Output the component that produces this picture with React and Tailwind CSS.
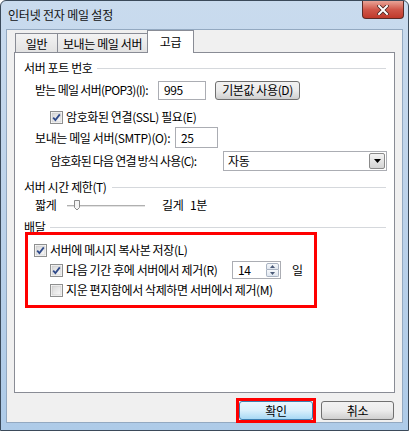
import React from 'react';

const FONT = "font-['Noto_Sans_CJK_KR','Noto_Sans',sans-serif]";

const CheckBox = ({ checked }) => (
  <svg width="13" height="13" viewBox="0 0 13 13" className="shrink-0">
    <defs>
      <linearGradient id="cbg" x1="0" y1="0" x2="1" y2="1">
        <stop offset="0" stopColor="#d6d6d6" />
        <stop offset="1" stopColor="#fafafa" />
      </linearGradient>
    </defs>
    <rect x="0.5" y="0.5" width="12" height="12" fill="#fff" stroke="#8e8f8f" />
    <rect x="2" y="2" width="9" height="9" fill="url(#cbg)" stroke="#c4c4c4" strokeWidth="0.6" />
    {checked && (
      <path d="M3.2 6.6 L5.4 9 L9.8 3.4" fill="none" stroke="#2f4a8a" strokeWidth="1.8" />
    )}
  </svg>
);

const Check = ({ checked, label, className = '' }) => (
  <div className={`flex items-center gap-[3px] ${className}`}>
    <CheckBox checked={checked} />
    <span>{label}</span>
  </div>
);

const GroupHeader = ({ title, className = '' }) => (
  <div className={`flex items-center h-[14px] ${className}`}>
    <span>{title}</span>
    <div className="flex-1 h-px bg-[#d5d8dc] ml-[5px]" />
  </div>
);

const TextBox = ({ value, className = '' }) => (
  <div className={`shrink-0 border border-[#abadb3] bg-white flex items-center pl-[5px] ${className}`}>
    {value}
  </div>
);

const Button = ({ children, primary, className = '' }) => (
  <div
    className={`shrink-0 flex items-center justify-center rounded-[3px] border ${
      primary
        ? 'border-[#3c7fb1] bg-linear-to-b from-[#eaf6fd] via-[#d9f0fc] to-[#a7d9f5]'
        : 'border-[#707070] bg-linear-to-b from-[#f2f2f2] via-[#ebebeb] to-[#cfcfcf]'
    } ${className}`}
  >
    {children}
  </div>
);

export default function App() {
  return (
    <div className={`w-[409px] h-[431px] text-[12px] tracking-[-0.4px] text-black leading-none whitespace-nowrap ${FONT}`}>
      <div className="w-[409px] h-[431px] border border-[#3b4a5a] rounded-t-[6px] bg-linear-to-b from-[#c9dbee] via-[#bcd2ea] to-[#aecbe8] flex flex-col">
        {/* title bar */}
        <div className="h-[28px] flex justify-between shrink-0">
          <span className="pl-[7px] pt-[8px] text-[12px] tracking-[-0.2px] text-[#111]">인터넷 전자 메일 설정</span>
          <div className="w-[42px] h-[18px] mr-[4px] rounded-b-[4px] border border-t-0 border-[#5b2a26] bg-linear-to-b from-[#e8a397] via-[#d0574a] to-[#c0392b] flex items-center justify-center">
            <svg width="12" height="10" viewBox="0 0 12 10">
              <path d="M2 1 L10 9 M10 1 L2 9" stroke="#4a2420" strokeWidth="3.6" strokeLinecap="square" />
              <path d="M2 1 L10 9 M10 1 L2 9" stroke="#fff" strokeWidth="2" strokeLinecap="square" />
            </svg>
          </div>
        </div>

        {/* client area */}
        <div className="mx-[5px] border border-[#93a9c1] bg-[#f0f0f0] flex flex-col px-[7px] h-[394px]">
          {/* tabs */}
          <div className="flex items-end h-[22px] pl-[1px] relative z-10">
            <div className="h-[19px] w-[43px] border border-b-0 border-[#898c95] bg-linear-to-b from-[#f3f3f3] to-[#e2e2e2] flex items-center justify-center pt-[1px]">
              일반
            </div>
            <div className="h-[19px] w-[91px] -ml-px border border-b-0 border-[#898c95] bg-linear-to-b from-[#f3f3f3] to-[#e2e2e2] flex items-center justify-center pt-[1px]">
              보내는 메일 서버
            </div>
            <div className="h-[23px] w-[47px] -ml-px -mb-px border border-b-0 border-[#898c95] bg-white flex items-start justify-center pt-[5px]">
              고급
            </div>
          </div>

          {/* panel */}
          <div className="h-[341px] border border-[#898c95] bg-white flex flex-col px-[9px] pr-[8px] relative">
            <GroupHeader title="서버 포트 번호" className="mt-[8px]" />

            <div className="flex items-center h-[20px] mt-[5px] pl-[11px]">
              <span className="w-[123px] shrink-0 tracking-[-0.7px]">받는 메일 서버(POP3)(I):</span>
              <TextBox value="995" className="w-[48px] h-[19px]" />
              <Button className="ml-[9px] w-[85px] h-[19px]">기본값 사용(D)</Button>
            </div>

            <Check checked label="암호화된 연결(SSL) 필요(E)" className="h-[14px] mt-[10px] pl-[26px]" />

            <div className="flex items-center h-[21px] mt-[3px] pl-[11px]">
              <span className="w-[140px] shrink-0">보내는 메일 서버(SMTP)(O):</span>
              <TextBox value="25" className="w-[43px] h-[21px]" />
            </div>

            <div className="flex items-center h-[20px] mt-[3px] pl-[26px]">
              <span className="w-[173px] shrink-0 tracking-[-0.8px]">암호화된 다음 연결 방식 사용(C):</span>
              <div className="shrink-0 w-[164px] h-[20px] border border-[#abadb3] bg-white flex items-center justify-between pl-[4px] pr-[1px]">
                <span>자동</span>
                <div className="w-[16px] h-[16px] border border-[#8a8a8a] rounded-[2px] bg-linear-to-b from-[#f4f4f4] to-[#d4d4d4] flex items-center justify-center">
                  <svg width="7" height="4" viewBox="0 0 7 4">
                    <path d="M0 0 H7 L3.5 4 Z" fill="#000" />
                  </svg>
                </div>
              </div>
            </div>

            <GroupHeader title="서버 시간 제한(T)" className="mt-[9px]" />

            <div className="flex items-center h-[14px] mt-[4px] pl-[11px]">
              <span className="w-[32px] shrink-0">짧게</span>
              <svg width="78" height="12" viewBox="0 0 78 12" className="shrink-0">
                <rect x="0" y="6" width="78" height="2" fill="#e3e3e3" />
                <line x1="0" y1="6.5" x2="78" y2="6.5" stroke="#b0b0b0" />
                <path d="M7.5 1.5 H12.5 V8.5 L10 11 L7.5 8.5 Z" fill="#f4f4f4" stroke="#8a8a8a" />
              </svg>
              <span className="ml-[17px] w-[28px] shrink-0">길게</span>
              <span>1분</span>
            </div>

            <GroupHeader title="배달" className="mt-[8px]" />

            <Check checked label="서버에 메시지 복사본 저장(L)" className="h-[14px] mt-[9px] pl-[10px]" />

            <div className="flex items-center h-[18px] mt-[4px] pl-[26px]">
              <Check checked label="다음 기간 후에 서버에서 제거(R)" className="w-[182px] shrink-0" />
              <div className="shrink-0 w-[49px] h-[18px] border border-[#abadb3] bg-white flex items-center justify-between pl-[5px] pr-px">
                <span>14</span>
                <div className="flex flex-col w-[13px] h-[14px]">
                  <div className="h-[7px] border border-[#a9b3c2] rounded-t-[2px] bg-linear-to-b from-[#f6f8fb] to-[#dfe6ef] flex items-center justify-center">
                    <svg width="5" height="3" viewBox="0 0 5 3"><path d="M0 3 H5 L2.5 0 Z" fill="#4a5a78" /></svg>
                  </div>
                  <div className="h-[7px] border border-t-0 border-[#a9b3c2] rounded-b-[2px] bg-linear-to-b from-[#f6f8fb] to-[#dfe6ef] flex items-center justify-center">
                    <svg width="5" height="3" viewBox="0 0 5 3"><path d="M0 0 H5 L2.5 3 Z" fill="#4a5a78" /></svg>
                  </div>
                </div>
              </div>
              <span className="ml-[11px]">일</span>
            </div>

            <Check label="지운 편지함에서 삭제하면 서버에서 제거(M)" className="h-[14px] mt-[4px] pl-[26px]" />

            {/* red highlight annotation */}
            <div className="absolute left-[10px] top-[179px] w-[292px] h-[76px] border-[3px] border-[#ff0000] pointer-events-none" />
          </div>

          {/* buttons */}
          <div className="flex justify-end gap-[8px] mt-[8px] pr-[1px]">
            <div className="relative">
              <Button primary className="w-[74px] h-[19px]">확인</Button>
              <div className="absolute -left-[3px] -top-[3px] w-[80px] h-[25px] border-[3px] border-[#ff0000]" />
            </div>
            <Button className="w-[73px] h-[19px]">취소</Button>
          </div>
        </div>
      </div>
    </div>
  );
}
